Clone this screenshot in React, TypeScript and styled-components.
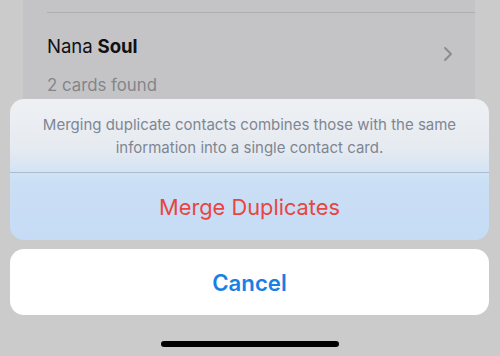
import React from "react";
import styled, { createGlobalStyle } from "styled-components";

const Global = createGlobalStyle`
  html, body { margin: 0; padding: 0; }
  body {
    width: 500px; height: 356px; overflow: hidden;
    background: #cbcbcb;
    font-family: Inter, "Noto Sans", "Liberation Sans", sans-serif;
    -webkit-font-smoothing: antialiased;
  }
`;

const Screen = styled.div`
  position: relative;
  width: 500px;
  height: 356px;
  overflow: hidden;
  background: #cbcbcb;
`;

const BackCard = styled.div`
  margin: 0 25px 0 23px;
  height: 110px;
  background: #c4c4c7;
  padding-left: 24px;
  display: flex;
  flex-direction: column;
`;

const Divider = styled.div`
  margin-top: 12px;
  height: 1px;
  background: #aeaeb2;
`;

const ContactRow = styled.div`
  display: flex;
  align-items: center;
  justify-content: space-between;
  padding-right: 22px;
  padding-top: 21px;
`;

const ContactText = styled.div`
  display: flex;
  flex-direction: column;
`;

const Name = styled.div`
  font-size: 18.6px;
  color: #111;
  line-height: 24px;
  letter-spacing: -0.1px;
  b { font-weight: 700; }
`;

const Sub = styled.div`
  margin-top: 16px;
  font-size: 16.8px;
  color: #858589;
  line-height: 22px;
`;

const Chevron = styled.svg`
  width: 10px;
  height: 16px;
  margin-top: -22px;
`;

const Sheet = styled.div`
  position: absolute;
  left: 10px;
  right: 11px;
  top: 99px;
  display: flex;
  flex-direction: column;
  gap: 9px;
`;

const Group = styled.div`
  border-radius: 14px;
  overflow: hidden;
  background: linear-gradient(180deg, #eef0f3 0%, #e6ebf1 35%, #cadff5 60%, #c6dcf6 100%);
`;

const Message = styled.div`
  height: 74px;
  box-sizing: border-box;
  padding: 14px 20px 0;
  text-align: center;
  font-size: 15px;
  line-height: 23px;
  color: #7e8693;
  border-bottom: 1px solid #a9bcd2;
`;

const ActionButton = styled.div<{ $color: string; $weight: number; $height: number; $size: number }>`
  height: ${(p) => p.$height}px;
  display: flex;
  align-items: center;
  justify-content: center;
  font-size: ${(p) => p.$size}px;
  color: ${(p) => p.$color};
  font-weight: ${(p) => p.$weight};
`;

const CancelGroup = styled.div`
  border-radius: 14px;
  background: #ffffff;
`;

const HomeBar = styled.div`
  position: absolute;
  left: 161px;
  top: 341px;
  width: 178px;
  height: 6px;
  border-radius: 3px;
  background: #000;
`;

export default function App() {
  return (
    <Screen>
      <Global />
      <BackCard>
        <Divider />
        <ContactRow>
          <ContactText>
            <Name>
              Nana <b>Soul</b>
            </Name>
            <Sub>2 cards found</Sub>
          </ContactText>
          <Chevron viewBox="0 0 10 16">
            <path d="M2 2 L8 8 L2 14" fill="none" stroke="#8c8c90" strokeWidth="2" strokeLinecap="round" strokeLinejoin="round" />
          </Chevron>
        </ContactRow>
      </BackCard>
      <Sheet>
        <Group>
          <Message>
            Merging duplicate contacts combines those with the same information into a single contact card.
          </Message>
          <ActionButton $color="#e8453f" $weight={400} $height={67} $size={21.8}>
            Merge Duplicates
          </ActionButton>
        </Group>
        <CancelGroup>
          <ActionButton $color="#1a7fe4" $weight={600} $height={66} $size={22.2}>
            Cancel
          </ActionButton>
        </CancelGroup>
      </Sheet>
      <HomeBar />
    </Screen>
  );
}
